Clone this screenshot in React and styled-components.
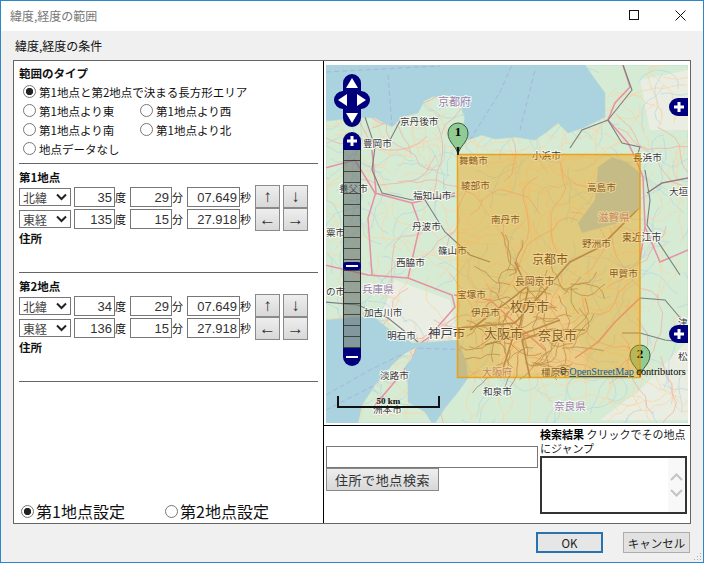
import React from 'react'
import styled, { createGlobalStyle } from 'styled-components'

const GlobalStyle = createGlobalStyle`
  html, body { margin: 0; padding: 0; background: #f0f0f0; }
  * { box-sizing: border-box; }
  body { font-family: "Noto Sans CJK JP", "Liberation Sans", sans-serif; font-size: 11.5px; color: #111; }
`

const Window = styled.div`
  width: 704px;
  height: 563px;
  position: relative;
  display: flex;
  flex-direction: column;
  border: 1px solid #2f86c8;
  background: #f0f0f0;
  overflow: hidden;
`
const TitleBar = styled.div`
  height: 30px;
  flex: none;
  display: flex;
  align-items: center;
  background: #fff;
  padding: 0 0 2px 9px;
  color: #777;
  font-size: 12px;
`
const TitleText = styled.span`
  flex: 1;
`
const WinButton = styled.span`
  width: 46px;
  height: 28px;
  display: flex;
  align-items: center;
  justify-content: center;
`
const Body = styled.div`
  flex: 1;
  display: flex;
  flex-direction: column;
  padding: 0 12px;
`
const GroupLabel = styled.div`
  height: 29px;
  padding: 8px 0 0 2px;
  line-height: 14px;
  font-size: 12px;
`
const Frame = styled.div`
  width: 678px;
  height: 464px;
  flex: none;
  display: flex;
  background: #fff;
  border: 1px solid #666;
`
const LeftPane = styled.div`
  width: 310px;
  flex: none;
  display: flex;
  flex-direction: column;
  padding: 5px 5px 2px 5px;
  border-right: 1px solid #000;
`
const RightPane = styled.div`
  flex: 1;
  display: flex;
  flex-direction: column;
  min-width: 0;
`
const Heading = styled.div`
  font-weight: 700;
  line-height: 14px;
  font-size: 11.5px;
  margin-top: ${p => p.$top || 0}px;
`
const RadioGrid = styled.div`
  display: grid;
  grid-template-columns: 117px 1fr;
  grid-auto-rows: 19px;
  margin: 2px 0 5px 4px;
`
const RadioLabel = styled.label`
  display: flex;
  align-items: center;
  gap: ${p => p.$big ? 2 : 3}px;
  white-space: nowrap;
  font-size: ${p => p.$big ? 16 : 11.5}px;
  grid-column: ${p => p.$wide ? '1 / 3' : 'auto'};
`
const Radio = styled.input.attrs({ type: 'radio' })`
  appearance: none;
  width: 13px;
  height: 13px;
  margin: 0;
  flex: none;
  border: 1px solid #777;
  border-radius: 50%;
  background: #fff;
  &:checked {
    background: radial-gradient(circle, #222 0 3.4px, #fff 3.9px);
  }
`
const Rule = styled.div`
  height: 1px;
  background: #666;
  margin-top: ${p => p.$top || 0}px;
`
const PointBody = styled.div`
  display: flex;
  margin-top: 1px;
`
const CoordRows = styled.div`
  display: grid;
  grid-auto-rows: 20px;
  row-gap: 2px;
  margin-top: 2px;
  width: 236px;
  flex: none;
`
const CoordRow = styled.div`
  display: flex;
  align-items: stretch;
`
const HemiBox = styled.div`
  position: relative;
  width: 52px;
  flex: none;
  margin: 1px 3px 1px 0;
`
const Hemi = styled.select`
  appearance: none;
  width: 100%;
  height: 100%;
  border: 1px solid #777;
  border-radius: 0;
  background: #fff;
  padding: 0 0 0 3px;
  color: #444;
  font: 12px "Noto Sans CJK JP", sans-serif;
`
const HemiArrow = styled.svg`
  position: absolute;
  right: 4px;
  top: 5px;
  pointer-events: none;
`
const CoordInput = styled.input`
  width: ${p => p.$w}px;
  flex: none;
  border: 1px solid #777;
  padding: 0 2px 0 0;
  text-align: right;
  background: #fff;
  color: #333;
  font: 13px "Liberation Sans", sans-serif;
`
const Unit = styled.span`
  width: ${p => p.$w}px;
  flex: none;
  font-size: 11px;
  line-height: 20px;
`
const ArrowGrid = styled.div`
  display: grid;
  grid-template-columns: 25px 25px;
  grid-auto-rows: 23px;
  column-gap: 3px;
`
const ArrowButton = styled.button`
  padding: 0;
  border: 1px solid #8a8a8a;
  background: linear-gradient(#eeeeee, #d8d8d8);
  color: #333;
  font: 17px/20px "Liberation Sans", sans-serif;
`
const Bottom = styled.div`
  margin-top: auto;
  display: grid;
  grid-template-columns: 144px 1fr;
  height: 22px;
  padding-left: 2px;
`
const MapWrap = styled.div`
  padding: 4px 2px 2px;
  flex: none;
  border-bottom: 1px solid #000;
`
const MapView = styled.div`
  position: relative;
  width: 362px;
  height: 358px;
  overflow: hidden;
  background: #aad3df;
`
const MapSvg = styled.svg`
  display: block;
`
const PanControl = styled.svg`
  position: absolute;
  left: 7px;
  top: 8px;
`
const ZoomBar = styled.div`
  position: absolute;
  left: 17px;
  top: 67px;
  width: 18px;
  height: 234px;
  display: flex;
  flex-direction: column;
`
const ZoomCap = styled.div`
  height: 18px;
  flex: none;
  background: #00007c;
  border-radius: ${p => p.$top ? '9px 9px 0 0' : '0 0 9px 9px'};
  display: flex;
  align-items: center;
  justify-content: center;
`
const ZoomTrack = styled.div`
  flex: 1;
  position: relative;
  border-left: 1px solid #2a2f2f;
  border-right: 1px solid #2a2f2f;
  background: repeating-linear-gradient(rgba(95,105,105,.55) 0 10px, rgba(40,45,45,.85) 10px 11px);
`
const ZoomHandle = styled.div`
  position: absolute;
  left: -1px;
  top: 112px;
  width: 18px;
  height: 8px;
  border-radius: 3px;
  background: #00007c;
  display: flex;
  align-items: center;
  justify-content: center;
`
const Dash = styled.span`
  width: 12px;
  height: 2px;
  background: #fff;
`
const SideTab = styled.div`
  position: absolute;
  right: 0;
  top: ${p => p.$top}px;
  width: 19px;
  height: 18px;
  border-radius: 9px 0 0 9px;
  background: #00007c;
  display: flex;
  align-items: center;
  justify-content: center;
`
const ScaleBar = styled.div`
  position: absolute;
  left: 11px;
  top: 331px;
  width: 103px;
  height: 12px;
  border: 2px solid #111;
  border-top: 0;
  text-align: center;
  font: 700 9px/10px "Liberation Serif", serif;
`
const Attribution = styled.div`
  position: absolute;
  left: 233px;
  top: 301px;
  white-space: nowrap;
  font: 10.2px/12px "Liberation Serif", serif;
  color: #000;
`
const OsmLink = styled.a`
  color: #0b5f98;
  text-decoration: underline;
`
const SearchRow = styled.div`
  flex: 1;
  display: flex;
  padding-left: 2px;
`
const SearchLeft = styled.div`
  width: 214px;
  flex: none;
  padding-top: 20px;
  display: flex;
  flex-direction: column;
  align-items: flex-start;
`
const SearchInput = styled.input`
  width: 212px;
  height: 22px;
  border: 1px solid #777;
  background: #fff;
`
const SearchButton = styled.button`
  width: 113px;
  height: 23px;
  padding: 0;
  border: 1px solid #8a8a8a;
  background: linear-gradient(#eeeeee, #d8d8d8);
  color: #333;
  letter-spacing: .6px;
  font: 13px "Noto Sans CJK JP", sans-serif;
`
const SearchRight = styled.div`
  width: 147px;
  flex: none;
  padding-top: 1px;
`
const ResultText = styled.div`
  line-height: 14px;
  font-size: 11px;
  white-space: nowrap;
  color: #222;
`
const ResultTitle = styled.b`
  color: #000;
`
const ResultBox = styled.div`
  height: 58px;
  margin-top: 1px;
  border: 2px solid #333;
  display: flex;
  justify-content: flex-end;
  background: #fff;
`
const ResultScroll = styled.div`
  width: 17px;
  background: #f8f8f8;
  display: flex;
  flex-direction: column;
  justify-content: center;
  align-items: center;
  gap: 8px;
`
const Footer = styled.div`
  height: 38px;
  flex: none;
  display: flex;
  justify-content: flex-end;
  gap: 20px;
  padding: 8px 1px 0 0;
`
const DialogButton = styled.button`
  width: 67px;
  height: 21px;
  padding: 0;
  border: ${p => p.$primary ? '2px solid #2a72ac' : '1px solid #adadad'};
  background: ${p => p.$primary ? '#e6e6e6' : '#e1e1e1'};
  color: #222;
  font: 11.5px "Noto Sans CJK JP", sans-serif;
`
const Grip = styled.svg`
  position: absolute;
  right: 1px;
  bottom: 1px;
`

// small seeded generator, gives the map its web of lanes and streams
const walks = (seed, count, steps, len, [bx, by, bw, bh] = [326, 65, 362, 358]) => {
  let s = seed
  const rnd = () => {
    s = (s * 16807) % 2147483647
    return s / 2147483647
  }
  const out = []
  for (let i = 0; i < count; i++) {
    let x = bx + rnd() * bw
    let y = by + rnd() * bh
    let a = rnd() * 6.28
    let d = `M${x.toFixed(1)} ${y.toFixed(1)}`
    for (let j = 0; j < steps; j++) {
      a += (rnd() - 0.5) * 1.5
      x += Math.cos(a) * len
      y += Math.sin(a) * len
      d += `L${x.toFixed(1)} ${y.toFixed(1)}`
    }
    out.push(d)
  }
  return out
}

const LAND = [
  'M326 121L345 119L358 117L375 118L392 127L402 117L418 113L424 101L432 97L447 95L458 100L465 117L463 128L468 140L482 135L495 139L515 137L535 140L548 131L558 123L568 133L585 127L605 117L605 93L594 78L585 65L688 65L688 423L435 423L445 408L458 392L468 378L466 362L458 340L435 342L412 343L392 332L375 318L358 317L326 320Z',
  'M417 347L412 358L405 367L408 385L408 402L425 412L432 423L358 423L362 405L375 385L392 365L405 353Z',
]
const PINK = [
  'M623 65L630 87L615 103L608 120L628 143L635 157L643 177L645 227L640 260',
  'M325 265L368 275L408 278L452 295L455 307L428 338L418 345',
  'M325 168L355 160L375 193L412 203L455 193',
  'M418 345L412 360L392 385L375 405',
  'M640 298L615 322L598 342L575 358',
  'M647 193L662 183L688 178',
  'M454 295L490 300L515 323L545 350',
  'M412 203L420 225L412 260L408 278',
  'M372 150L376 192L368 218L372 275',
  'M645 227L660 262L688 250',
]
const RAIL = [
  'M623 65L632 90L608 120L622 143L640 147L636 160',
  'M608 120L582 130L570 148',
  'M647 193L662 183L688 178',
  'M365 117L375 147L372 170L382 193L412 200L455 196',
  'M325 302L358 305L388 318L418 342',
  'M622 333L640 333L665 340L682 342',
  'M640 298L665 300L682 320',
  'M400 121L390 140L372 142',
  'M645 170L650 200L647 225L680 275',
  'M425 200L445 232L470 255L490 262',
]
const OSAKA = [
  'M458 328L515 323L545 290L570 262L600 247L640 207',
  'M500 378L512 340L520 325L528 290L515 262',
  'M530 378L522 340L548 330L585 330',
  'M470 330L510 300L535 280',
  'M485 345L520 335L560 320',
]
const LABELS = [
  ['京都府', 438, 106, 11, '#9a7fa8'],
  ['京丹後市', 400, 125, 9.6],
  ['豊岡市', 363, 147, 9.6],
  ['舞鶴市', 459, 164, 9.6],
  ['綾部市', 461, 189, 9.6],
  ['福知山市', 413, 199, 9.6],
  ['南丹市', 491, 223, 9.6],
  ['丹波市', 412, 230, 9.6],
  ['篠山市', 438, 254, 9.6],
  ['養父市', 339, 192, 9.6],
  ['粟市', 326, 236, 9.6],
  ['小浜市', 532, 159, 9.6],
  ['長浜市', 633, 161, 9.6],
  ['高島市', 587, 191, 9.6],
  ['滋賀県', 598, 221, 10.6, '#9a7fa8'],
  ['大垣', 669, 195, 9.6],
  ['野洲市', 582, 247, 9.6],
  ['東近江市', 622, 241, 9.8],
  ['西脇市', 396, 266, 9.6],
  ['兵庫県', 362, 293, 10.6, '#9a7fa8'],
  ['の市', 326, 295, 9.6],
  ['宝塚市', 457, 298, 9.6],
  ['加古川市', 364, 316, 9.6],
  ['伊丹市', 471, 316, 9.6],
  ['明石市', 387, 339, 9.6],
  ['神戸市', 428, 338, 12.4],
  ['大阪市', 484, 338, 13],
  ['淡路市', 380, 379, 9.6],
  ['大阪府', 482, 376, 10, '#9a7fa8'],
  ['和泉市', 483, 395, 9.6],
  ['洲本市', 373, 413, 9.6],
  ['京都市', 532, 264, 12],
  ['長岡京市', 515, 285, 9.8],
  ['枚方市', 510, 311, 13],
  ['奈良市', 538, 340, 13],
  ['甲賀市', 609, 277, 9.6],
  ['橿原市', 541, 376, 9.6],
  ['奈良県', 554, 410, 10.6, '#9a7fa8'],
  ['松', 678, 360, 9.6],
  ['津', 678, 326, 9.6],
]

const Pin = ({ x, y, n }) => (
  <g transform={`translate(${x} ${y})`}>
    <path d="M0 0C-1 -9 -10 -12 -10 -22A10 10 0 1 1 10 -22C10 -12 1 -9 0 0Z" fill="#8fcb93" stroke="#3c5a40" strokeWidth="1" />
    <path d="M-1.4 -8L1.4 -8L0.6 0L-0.6 0Z" fill="#111" />
    <text x="0" y="-19" textAnchor="middle" fontFamily="Liberation Serif, serif" fontWeight="700" fontSize="13" fill="#000">{n}</text>
  </g>
)

const MapArt = () => (
  <MapSvg width="362" height="358" viewBox="326 65 362 358">
    <defs>
      <clipPath id="land">
        {LAND.map(d => <path key={d} d={d} />)}
      </clipPath>
    </defs>
    <rect x="326" y="65" width="362" height="358" fill="#aad3df" />
    <path d="M326 72L400 68L440 66M388 75L392 125M470 140L500 92L512 65M520 130L535 70M326 395L370 370L415 348L470 350M326 410L375 385" fill="none" stroke="#a9b5d6" strokeWidth="1" strokeDasharray="5 3" />
    {LAND.map(d => <path key={d} d={d} fill="#d6ebd3" stroke="#b5d3d6" strokeWidth=".6" />)}
    <g clipPath="url(#land)" fill="none">
      <path d="M395 280L450 300L458 340L410 340L380 315ZM500 300L560 290L590 370L500 375ZM640 80L688 70L688 130L650 130ZM640 390L688 340L688 420L600 420Z" fill="#eaeee2" />
      {walks(4711, 170, 8, 7).map(d => <path key={d} d={d} stroke="#aed3e2" strokeWidth=".6" />)}
      {walks(90210, 190, 8, 8).map(d => <path key={d} d={d} stroke="#f8d5ab" strokeWidth=".8" />)}
      {walks(1234, 50, 9, 10).map(d => <path key={d} d={d} stroke="#f1b3a6" strokeWidth=".8" />)}
      {walks(777, 60, 6, 7, [490, 270, 90, 100]).map(d => <path key={d} d={d} stroke="#a08878" strokeWidth=".8" />)}
      {PINK.map(d => <path key={d} d={d} stroke="#e88fa3" strokeWidth="1.5" />)}
      {RAIL.map(d => <path key={d} d={d} stroke="#7b7f80" strokeWidth="1.1" />)}
      {OSAKA.map(d => <path key={d} d={d} stroke="#9a8272" strokeWidth="1.6" />)}
    </g>
    <path d="M612 157L628 163L640 173L641 207L618 223L582 233L578 223L595 200L598 167Z" fill="#aad3df" />
    {LABELS.map(([t, x, y, size, fill]) => (
      <text key={t} x={x} y={y} fontSize={size} fontFamily="Noto Sans CJK JP, sans-serif" fill={fill || '#3a3a3a'} stroke="#fff" strokeOpacity=".75" strokeWidth="2" paintOrder="stroke">{t}</text>
    ))}
    <Pin x={640} y={377} n="2" />
    <rect x="457.5" y="154.5" width="182.5" height="223" fill="#ee9900" fillOpacity=".4" stroke="#ee9900" strokeOpacity=".85" strokeWidth="1.5" />
    <Pin x={458} y={155} n="1" />
  </MapSvg>
)

const Plus = () => (
  <svg width="12" height="12" viewBox="0 0 12 12">
    <path d="M4.5 1H7.5V4.5H11V7.5H7.5V11H4.5V7.5H1V4.5H4.5Z" fill="#fff" />
  </svg>
)

const PanArt = () => (
  <PanControl width="38" height="56" viewBox="0 0 38 56">
    <path d="M19 1A9 9 0 0 1 28 10V18H28A9 9 0 0 1 37 27A9 9 0 0 1 28 36V45A9 9 0 0 1 10 45V36A9 9 0 0 1 10 18V10A9 9 0 0 1 19 1Z" fill="#00007c" />
    <path d="M19 5L25 15H13ZM19 50L13 40H25ZM5 27L14 21V33ZM33 27L24 21V33Z" fill="#fff" />
  </PanControl>
)

const MapPanel = () => (
  <MapView>
    <MapArt />
    <PanArt />
    <ZoomBar>
      <ZoomCap $top><Plus /></ZoomCap>
      <ZoomTrack>
        <ZoomHandle><Dash /></ZoomHandle>
      </ZoomTrack>
      <ZoomCap><Dash /></ZoomCap>
    </ZoomBar>
    <SideTab $top={33}><Plus /></SideTab>
    <SideTab $top={260}><Plus /></SideTab>
    <ScaleBar>50 km</ScaleBar>
    <Attribution>© <OsmLink>OpenStreetMap</OsmLink> contributors</Attribution>
  </MapView>
)

const Hemisphere = ({ value, options }) => (
  <HemiBox>
    <Hemi defaultValue={value}>
      {options.map(o => <option key={o}>{o}</option>)}
    </Hemi>
    <HemiArrow width="11" height="8" viewBox="0 0 11 8">
      <path d="M1 1.5L5.5 6L10 1.5" fill="none" stroke="#222" strokeWidth="2" />
    </HemiArrow>
  </HemiBox>
)

const Coord = ({ hemi, options, deg, min, sec }) => (
  <CoordRow>
    <Hemisphere value={hemi} options={options} />
    <CoordInput $w={41} defaultValue={deg} />
    <Unit $w={15}>度</Unit>
    <CoordInput $w={42} defaultValue={min} />
    <Unit $w={15}>分</Unit>
    <CoordInput $w={53} defaultValue={sec} />
    <Unit $w={15}>秒</Unit>
  </CoordRow>
)

const PointBlock = ({ title, top, lat, lon }) => (
  <>
    <Heading $top={top}>{title}</Heading>
    <PointBody>
      <CoordRows>
        <Coord hemi="北緯" options={['北緯', '南緯']} deg={lat} min="29" sec="07.649" />
        <Coord hemi="東経" options={['東経', '西経']} deg={lon} min="15" sec="27.918" />
      </CoordRows>
      <ArrowGrid>
        <ArrowButton>↑</ArrowButton>
        <ArrowButton>↓</ArrowButton>
        <ArrowButton>←</ArrowButton>
        <ArrowButton>→</ArrowButton>
      </ArrowGrid>
    </PointBody>
    <Heading>住所</Heading>
  </>
)

const Chevron = ({ up }) => (
  <svg width="13" height="8" viewBox="0 0 13 8">
    <path d={up ? 'M1 7L6.5 1.5L12 7' : 'M1 1L6.5 6.5L12 1'} fill="none" stroke="#c4c4c4" strokeWidth="2" />
  </svg>
)

export default function App() {
  return (
    <>
      <GlobalStyle />
      <Window>
        <TitleBar>
          <TitleText>緯度,経度の範囲</TitleText>
          <WinButton>
            <svg width="10" height="10" viewBox="0 0 10 10">
              <rect x=".5" y=".5" width="9" height="9" fill="none" stroke="#111" />
            </svg>
          </WinButton>
          <WinButton>
            <svg width="11" height="11" viewBox="0 0 11 11">
              <path d="M.5 .5L10.5 10.5M10.5 .5L.5 10.5" stroke="#111" />
            </svg>
          </WinButton>
        </TitleBar>
        <Body>
          <GroupLabel>緯度,経度の条件</GroupLabel>
          <Frame>
            <LeftPane>
              <Heading>範囲のタイプ</Heading>
              <RadioGrid>
                <RadioLabel $wide><Radio name="kind" defaultChecked />第1地点と第2地点で決まる長方形エリア</RadioLabel>
                <RadioLabel><Radio name="kind" />第1地点より東</RadioLabel>
                <RadioLabel><Radio name="kind" />第1地点より西</RadioLabel>
                <RadioLabel><Radio name="kind" />第1地点より南</RadioLabel>
                <RadioLabel><Radio name="kind" />第1地点より北</RadioLabel>
                <RadioLabel $wide><Radio name="kind" />地点データなし</RadioLabel>
              </RadioGrid>
              <Rule />
              <PointBlock title="第1地点" top={6} lat="35" lon="135" />
              <Rule $top={27} />
              <PointBlock title="第2地点" top={6} lat="34" lon="136" />
              <Rule $top={27} />
              <Bottom>
                <RadioLabel $big><Radio name="point" defaultChecked />第1地点設定</RadioLabel>
                <RadioLabel $big><Radio name="point" />第2地点設定</RadioLabel>
              </Bottom>
            </LeftPane>
            <RightPane>
              <MapWrap>
                <MapPanel />
              </MapWrap>
              <SearchRow>
                <SearchLeft>
                  <SearchInput />
                  <SearchButton>住所で地点検索</SearchButton>
                </SearchLeft>
                <SearchRight>
                  <ResultText><ResultTitle>検索結果</ResultTitle> クリックでその地点<br />にジャンプ</ResultText>
                  <ResultBox>
                    <ResultScroll>
                      <Chevron up />
                      <Chevron />
                    </ResultScroll>
                  </ResultBox>
                </SearchRight>
              </SearchRow>
            </RightPane>
          </Frame>
          <Footer>
            <DialogButton $primary>OK</DialogButton>
            <DialogButton>キャンセル</DialogButton>
          </Footer>
        </Body>
        <Grip width="10" height="10" viewBox="0 0 10 10">
          <path d="M8 2h1v1H8zM5 5h1v1H5zM8 5h1v1H8zM2 8h1v1H2zM5 8h1v1H5zM8 8h1v1H8z" fill="#aaa" />
        </Grip>
      </Window>
    </>
  )
}
